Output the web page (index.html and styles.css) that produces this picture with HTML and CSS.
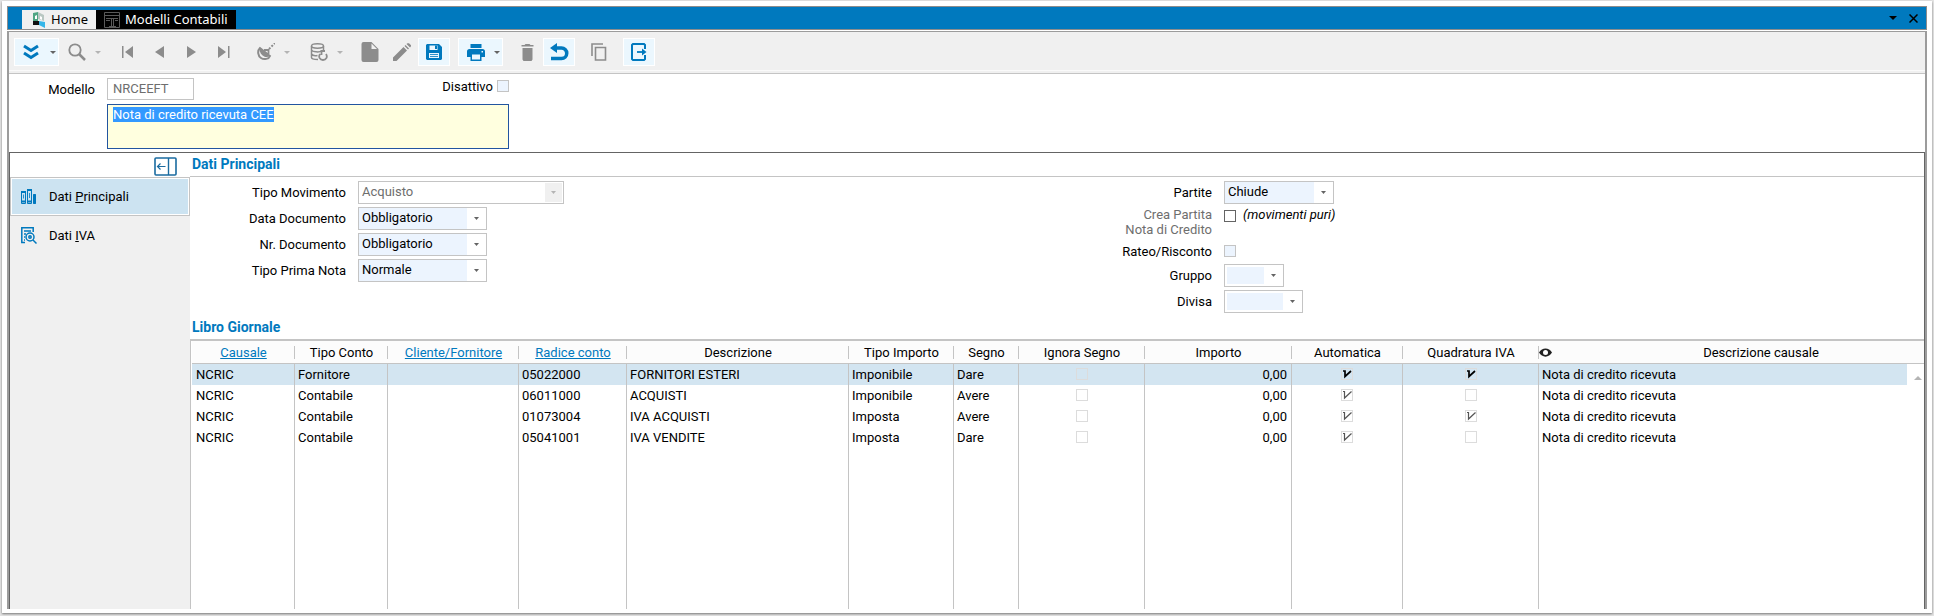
FILE: index.html
```html
<!doctype html>
<html lang="it">
<head>
  <meta charset="UTF-8">
  <meta name="viewport" content="width=device-width, initial-scale=1.0">
  <title>Modelli Contabili</title>
  <link rel="stylesheet" href="styles.css">
</head>
<body>
  <div class="frame">
    <div class="window">
      <header class="titlebar">
        <nav class="tabs">
          <a href="#" class="tab">
            <svg width="14" height="16" viewBox="0 0 14 16"><path d="M1 1l5-1v10H1z" fill="#4fa583"/><path d="M6 0l6 3v6L6 7z" fill="#b9c7c2"/><path d="M3 4l2-1v4H3zM8 4l2 1v3L8 7z" fill="#fff"/><path d="M1 9h6v4H1z" fill="#111"/><path d="M7 9l6 1v6l-6-3z" fill="#35b5e8"/></svg>
            <span>Home</span>
          </a>
          <a href="#" class="tab tab-active">
            <svg width="16" height="16" viewBox="0 0 16 16" fill="none" stroke="#5a5a5a"><path d="M.5 .5h15v15H.5zM1 3.500h14M2 6.500h12M7.500 7v7M9.500 7v7M2 8.500h4M11 8.500h3M5 14.500h7"/></svg>
            <span>Modelli Contabili</span>
          </a>
        </nav>
        <div class="winbtns">
          <button type="button" aria-label="Elenco"><svg width="8" height="4" viewBox="0 0 8 4"><path d="M0 0h8L4 4z"/></svg></button>
          <button type="button" aria-label="Chiudi"><svg width="9" height="9" viewBox="0 0 9 9"><path d="M.5 .5l8 8M8.500 .5l-8 8" stroke="#000" stroke-width="1.500"/></svg></button>
        </div>
      </header>

      <div class="toolbar">
        <div class="group">
          <button type="button" class="tool split on" aria-label="Azioni">
            <svg width="16" height="16" viewBox="0 0 16 16" fill="none" stroke="#0079be" stroke-width="3"><path d="M1 2l7 4.500L15 2M1 9l7 4.500L15 9"/></svg>
            <i class="caret"></i>
          </button>
          <button type="button" class="tool split" aria-label="Cerca">
            <svg width="18" height="18" viewBox="0 0 18 18" fill="none" stroke="#8c8c8c"><circle cx="7" cy="7" r="5.700" stroke-width="1.800"/><path d="M11 11l6 6" stroke-width="2.500"/></svg>
            <i class="caret"></i>
          </button>
        </div>
        <div class="group">
          <button type="button" class="tool" aria-label="Primo"><svg width="12" height="12" viewBox="0 0 12 12" fill="#8c8c8c"><path d="M0 0h1.500v12H0zM11 0v12L3 6z"/></svg></button>
          <button type="button" class="tool" aria-label="Precedente"><svg width="12" height="12" viewBox="0 0 12 12" fill="#8c8c8c"><path d="M10 0v12L1 6z"/></svg></button>
          <button type="button" class="tool" aria-label="Successivo"><svg width="12" height="12" viewBox="0 0 12 12" fill="#8c8c8c"><path d="M1 0v12l9-6z"/></svg></button>
          <button type="button" class="tool" aria-label="Ultimo"><svg width="12" height="12" viewBox="0 0 12 12" fill="#8c8c8c"><path d="M10 0h1.500v12H10zM0 0v12l8-6z"/></svg></button>
        </div>
        <div class="group">
          <button type="button" class="tool split" aria-label="Trasmissione">
            <svg width="18" height="18" viewBox="0 0 18 18" fill="none" stroke="#8c8c8c"><path d="M3 5C0 8 1 13 4 15s8 1 9-2L3 5z" stroke-width="2"/><path d="M3 5l10 8c-3 2-6 1-8-1S2 7 3 5z" fill="#8c8c8c" stroke="none"/><path d="M7 7h4.500v4" stroke-width="1.800"/><path d="M12 6l6-6" stroke-width="2" stroke-dasharray="2 1.500"/></svg>
            <i class="caret"></i>
          </button>
        </div>
        <div class="group">
          <button type="button" class="tool split" aria-label="Archivio">
            <svg width="18" height="18" viewBox="0 0 18 18" fill="none" stroke="#8c8c8c" stroke-width="1.500"><ellipse cx="7.500" cy="3" rx="6" ry="2.200"/><path d="M1.500 3v11.500c0 1.500 3 2 6.500 2M13.500 3v5M1.500 7c1 2 8 2.500 10 1M1.500 11c1 1.500 4 2 6 1.500"/><path d="M10 11c-2 3 0 6 3 6s5-3 3-6M15 8h-3.500v4" stroke-width="1.800"/></svg>
            <i class="caret"></i>
          </button>
        </div>
        <div class="group">
          <button type="button" class="tool" aria-label="Nuovo"><svg width="18" height="22" viewBox="0 0 18 22" fill="#8c8c8c"><path d="M2.500 1h8l7 7v11a2 2 0 0 1-2 2h-13a2 2 0 0 1-2-2V3a2 2 0 0 1 2-2z"/><path d="M10.500 2.500v5.500H16z" fill="#f0f0f0"/></svg></button>
          <button type="button" class="tool" aria-label="Modifica"><svg width="18" height="18" viewBox="0 0 18 18" fill="#8c8c8c"><path d="M0 14.500V18h3.500L14 7.500 10.500 4zM11.500 3l1-1 3.500 3.500-1 1zM13.500 1l1-.8h1.500L18 2.200v1L17 4.500z"/></svg></button>
          <button type="button" class="tool on" aria-label="Salva"><svg width="16" height="16" viewBox="0 0 16 16"><path d="M1 0h12l3 3v12l-1 1H1l-1-1V1z" fill="#0079be"/><path d="M3.500 1.500h8V6h-8zM3 9h10v5H3z" fill="#ebf7fe"/><path d="M9 1.500h2V5H9z" fill="#0079be"/><path d="M4 10.500h8M4 12.500h8" stroke="#0079be" stroke-width=".8"/></svg></button>
        </div>
        <div class="group">
          <button type="button" class="tool split on" aria-label="Stampa">
            <svg width="18" height="17" viewBox="0 0 18 17" fill="#0079be"><path d="M3.500 0h11v4h-11zM2.500 5h13A2.500 2.500 0 0 1 18 7.500V13h-3.500v4h-11v-4H0V7.500A2.500 2.500 0 0 1 2.500 5z"/><path d="M5 10.500h8v5H5zM14.500 7h1.500v1.500h-1.500z" fill="#ebf7fe"/></svg>
            <i class="caret"></i>
          </button>
        </div>
        <div class="group">
          <button type="button" class="tool" aria-label="Elimina"><svg width="13" height="17" viewBox="0 0 13 17" fill="#8c8c8c"><path d="M4.500 0h4l1 1H12.500v1.500H.5V1h3zM1.500 4h10v11.500l-1 1.500h-8l-1-1.500z"/></svg></button>
          <button type="button" class="tool on" aria-label="Annulla"><svg width="19" height="18" viewBox="0 0 19 18"><path d="M5 5h6.500a5 5 0 0 1 0 10.500H1" fill="none" stroke="#0079be" stroke-width="3.500"/><path d="M0 5l7-5v10z" fill="#0079be"/></svg></button>
        </div>
        <div class="group">
          <button type="button" class="tool" aria-label="Copia"><svg width="16" height="18" viewBox="0 0 16 18" fill="none" stroke="#8c8c8c" stroke-width="1.600"><path d="M1 13V1h11M4.500 4.500h10v12.500h-10z"/></svg></button>
        </div>
        <div class="group">
          <button type="button" class="tool on" aria-label="Esci"><svg width="16" height="18" viewBox="0 0 16 18" fill="none" stroke="#0079be" stroke-width="2"><path d="M14 6V2l-1-1H2L1 2v14l1 1h11l1-1v-4"/><path d="M6 9h6" stroke-width="1.800"/><path d="M11 5.500V12.500L15.500 9z" fill="#0079be" stroke="none"/></svg></button>
        </div>
      </div>

      <form class="head">
        <label for="modello">Modello</label>
        <div class="head-row">
          <input type="text" id="modello" class="code" value="NRCEEFT" readonly>
          <label class="disattivo">Disattivo <input type="checkbox" class="check check-blue"></label>
        </div>
        <textarea id="descrizione" class="descr" aria-label="Descrizione" spellcheck="false">Nota di credito ricevuta CEE</textarea>
      </form>

      <div class="body">
        <aside class="side">
          <div class="side-top">
            <button type="button" class="collapse" aria-label="Riduci"><svg width="23" height="19" viewBox="0 0 23 19" fill="none" stroke="#1a6ba0"><rect x="1" y="1" width="21" height="17" rx="1" stroke-width="1.600"/><path d="M14.500 1v17" stroke-width="1.400"/><path d="M3.500 9.500h8M6.500 6.500l-3 3 3 3" stroke-width="1.200"/></svg></button>
          </div>
          <a href="#" class="side-item side-active">
            <svg width="16" height="16" viewBox="0 0 16 16" fill="none" stroke="#0079be"><path d="M.5 3.500h4v11h-4zM6.500 1.500h4v13h-4zM12.500 5.500h2v9h-2z"/><path d="M0 12.500h5M0 3h5M6 1h5M6 12.500h5M13.500 5v10" stroke-width="2"/><path d="M2.500 5.500v4M8.500 4v5" stroke-width=".8"/></svg>
            <span>Dati <u>P</u>rincipali</span>
          </a>
          <a href="#" class="side-item">
            <svg width="16" height="17" viewBox="0 0 16 17" fill="none" stroke="#0079be" stroke-width="1.500"><path d="M4 15.500H.8V.8h11.400V5M3 4h7M3 7h2M3 10h1M3 13h1"/><circle cx="9" cy="10" r="4"/><circle cx="9" cy="10" r="1.200"/><path d="M12 13l3.500 3.500"/></svg>
            <span>Dati <u>I</u>VA</span>
          </a>
        </aside>

        <main class="content">
          <h2 class="title title-line">Dati Principali</h2>
          <form class="fields">
            <div class="col">
              <div class="field">
                <label for="tipomov">Tipo Movimento</label>
                <select id="tipomov" class="combo combo-xl" disabled><option>Acquisto</option></select>
              </div>
              <div class="field">
                <label for="datadoc">Data Documento</label>
                <select id="datadoc" class="combo combo-l"><option>Obbligatorio</option></select>
              </div>
              <div class="field">
                <label for="nrdoc">Nr. Documento</label>
                <select id="nrdoc" class="combo combo-l"><option>Obbligatorio</option></select>
              </div>
              <div class="field">
                <label for="prima">Tipo Prima Nota</label>
                <select id="prima" class="combo combo-l"><option>Normale</option></select>
              </div>
            </div>
            <div class="col">
              <div class="field">
                <label for="partite">Partite</label>
                <select id="partite" class="combo combo-m"><option>Chiude</option></select>
              </div>
              <div class="field field-top">
                <label for="crea" class="dim">Crea Partita<br>Nota di Credito</label>
                <input type="checkbox" id="crea" class="check check-dark">
                <em>(movimenti puri)</em>
              </div>
              <div class="field field-short">
                <label for="rateo">Rateo/Risconto</label>
                <input type="checkbox" id="rateo" class="check check-blue">
              </div>
              <div class="field">
                <label for="gruppo">Gruppo</label>
                <select id="gruppo" class="combo combo-empty combo-xs"><option></option></select>
              </div>
              <div class="field">
                <label for="divisa">Divisa</label>
                <select id="divisa" class="combo combo-empty combo-s"><option></option></select>
              </div>
            </div>
          </form>

          <h2 class="title title-grid">Libro Giornale</h2>
          <div class="gridbox">
            <table class="journal">
              <colgroup>
                <col class="w-causale"><col class="w-conto"><col class="w-cliente"><col class="w-radice"><col class="w-descr"><col class="w-importo"><col class="w-segno"><col class="w-ignora"><col class="w-valore"><col class="w-auto"><col class="w-quad"><col><col class="w-scroll">
              </colgroup>
              <thead>
                <tr>
                  <th><a href="#">Causale</a></th>
                  <th>Tipo Conto</th>
                  <th><a href="#">Cliente/Fornitore</a></th>
                  <th><a href="#">Radice conto</a></th>
                  <th>Descrizione</th>
                  <th>Tipo Importo</th>
                  <th>Segno</th>
                  <th>Ignora Segno</th>
                  <th>Importo</th>
                  <th>Automatica</th>
                  <th>Quadratura IVA</th>
                  <th colspan="2" class="last">
                    <div class="eyehead">
                      <svg width="13" height="9" viewBox="0 0 13 9"><path d="M0 4.500C3-1 10-1 13 4.500 10 10 3 10 0 4.500z" fill="#222"/><circle cx="6.500" cy="4.500" r="2.500" fill="#fff"/></svg>
                      <span>Descrizione causale</span>
                    </div>
                  </th>
                </tr>
              </thead>
              <tbody>
                <tr class="selected">
                  <td>NCRIC</td><td>Fornitore</td><td></td><td>05022000</td><td>FORNITORI ESTERI</td><td>Imponibile</td><td>Dare</td>
                  <td class="mid"><input type="checkbox" class="check" aria-label="Ignora Segno"></td>
                  <td class="num">0,00</td>
                  <td class="mid"><input type="checkbox" class="check" aria-label="Automatica" checked></td>
                  <td class="mid"><input type="checkbox" class="check" aria-label="Quadratura IVA" checked></td>
                  <td class="last">Nota di credito ricevuta</td>
                  <td class="scroll" rowspan="5"><button type="button" aria-label="Su"><svg width="8" height="4" viewBox="0 0 8 4"><path d="M4 0l4 4H0z" fill="#b4b4b4"/></svg></button></td>
                </tr>
                <tr>
                  <td>NCRIC</td><td>Contabile</td><td></td><td>06011000</td><td>ACQUISTI</td><td>Imponibile</td><td>Avere</td>
                  <td class="mid"><input type="checkbox" class="check" aria-label="Ignora Segno"></td>
                  <td class="num">0,00</td>
                  <td class="mid"><input type="checkbox" class="check" aria-label="Automatica" checked></td>
                  <td class="mid"><input type="checkbox" class="check" aria-label="Quadratura IVA"></td>
                  <td class="last">Nota di credito ricevuta</td>
                </tr>
                <tr>
                  <td>NCRIC</td><td>Contabile</td><td></td><td>01073004</td><td>IVA ACQUISTI</td><td>Imposta</td><td>Avere</td>
                  <td class="mid"><input type="checkbox" class="check" aria-label="Ignora Segno"></td>
                  <td class="num">0,00</td>
                  <td class="mid"><input type="checkbox" class="check" aria-label="Automatica" checked></td>
                  <td class="mid"><input type="checkbox" class="check" aria-label="Quadratura IVA" checked></td>
                  <td class="last">Nota di credito ricevuta</td>
                </tr>
                <tr>
                  <td>NCRIC</td><td>Contabile</td><td></td><td>05041001</td><td>IVA VENDITE</td><td>Imposta</td><td>Dare</td>
                  <td class="mid"><input type="checkbox" class="check" aria-label="Ignora Segno"></td>
                  <td class="num">0,00</td>
                  <td class="mid"><input type="checkbox" class="check" aria-label="Automatica" checked></td>
                  <td class="mid"><input type="checkbox" class="check" aria-label="Quadratura IVA"></td>
                  <td class="last">Nota di credito ricevuta</td>
                </tr>
                <tr class="filler">
                  <td></td><td></td><td></td><td></td><td></td><td></td><td></td><td></td><td></td><td></td><td></td><td class="last"></td>
                </tr>
              </tbody>
            </table>
          </div>
        </main>
      </div>
    </div>
  </div>

  <script type="text/javascript">
    var descr = document.getElementById("descrizione");
    descr.focus();
    descr.select();
  </script>
</body>
</html>
```
FILE: styles.css
```css
* {
  box-sizing: border-box;
}
html, body {
  margin: 0;
  padding: 0;
}
body {
  display: flex;
  min-height: 100vh;
  padding: 1px 2px 3px 2px;
  background: #e4e4e4;
  font-family: Roboto, "Liberation Sans", sans-serif;
  font-size: 13px;
  line-height: 15px;
  color: #000;
}
button, input, select, textarea {
  margin: 0;
  font: inherit;
}
button {
  padding: 0;
  border: 0;
  background: none;
}
a {
  color: inherit;
  text-decoration: none;
}
svg {
  display: block;
  flex: none;
}

.frame {
  display: flex;
  flex: 1;
  min-width: 0;
  padding: 5px 5px 4px;
  background: #fff;
  box-shadow: 0 1px 2px #777;
}
.window {
  display: flex;
  flex-direction: column;
  flex: 1;
  min-width: 0;
}

/* title bar */
.titlebar {
  display: flex;
  align-items: flex-end;
  justify-content: space-between;
  height: 24px;
  padding-left: 14px;
  border: 1px solid #8c8c8c;
  background: #0079be;
}
.tabs {
  display: flex;
  font-family: "Noto Sans", sans-serif;
}
.tab {
  display: flex;
  align-items: center;
  gap: 5px;
  height: 19px;
  padding: 0 8px 0 10px;
  background: #f0f0f0;
}
.tab-active {
  padding: 0 8px;
  background: #000;
  color: #fff;
}
.winbtns {
  display: flex;
  align-self: center;
  align-items: center;
  gap: 12px;
  padding-right: 8px;
}

/* toolbar */
.toolbar {
  display: flex;
  align-items: center;
  gap: 8px;
  height: 43px;
  margin-top: 1px;
  padding: 0 5px 2px;
  border: solid #9c9c9c;
  border-width: 1px 2px 0;
  background: #f0f0f0;
  box-shadow: inset 0 -1px #c4c4c4, inset 0 -3px #f0f0f0, inset 0 -4px #fafafa;
}
.group {
  display: flex;
}
.tool {
  display: flex;
  align-items: center;
  justify-content: center;
  width: 32px;
  height: 28px;
  border: 1px solid transparent;
}
.split {
  justify-content: space-between;
  width: 45px;
  padding: 0 2px 0 8px;
}
.on {
  border-color: #fff;
  background: #ebf7fe;
}
.caret {
  border: 3px solid transparent;
  border-top-color: #b4b4b4;
  border-bottom-width: 0;
}
.on .caret {
  border-top-color: #646464;
}

/* record header */
.head {
  display: grid;
  grid-template-columns: 86px 402px;
  column-gap: 12px;
  row-gap: 4px;
  padding: 4px 0 3px;
  border: solid #9c9c9c;
  border-width: 0 2px;
}
.head > label {
  padding-top: 4px;
  text-align: right;
}
.head-row {
  display: flex;
  justify-content: space-between;
}
.code {
  width: 87px;
  height: 22px;
  padding: 0 5px 2px;
  border: 1px solid #c4c4c4;
  color: #6e6e6e;
  outline: none;
}
.disattivo {
  display: flex;
  gap: 4px;
  align-items: center;
  height: 16px;
}
.descr {
  grid-column: 2;
  height: 45px;
  padding: 2px 5px;
  border: 1px solid #2255a0;
  background: #ffffdf;
  outline: none;
  resize: none;
}
.descr::selection {
  background: #3399ff;
  color: #fff;
}

/* check boxes and combos */
.check {
  flex: none;
  width: 12px;
  height: 12px;
  appearance: none;
  border: 1px solid #dcdcdc;
}
.check:checked {
  background: url("data:image/svg+xml,%3Csvg xmlns='http://www.w3.org/2000/svg' viewBox='0 0 10 10'%3E%3Cpath d='M1 1.500h1.500V8L9.500 1.500' fill='none' stroke='%23555' stroke-width='1.200'/%3E%3C/svg%3E") center / 10px 10px no-repeat;
}
.selected .check:checked {
  background-image: url("data:image/svg+xml,%3Csvg xmlns='http://www.w3.org/2000/svg' viewBox='0 0 10 10'%3E%3Cpath d='M1 2h2v5.500L9 2' fill='none' stroke='%23000' stroke-width='1.700'/%3E%3C/svg%3E");
}
.check-blue {
  border-color: #c4c4c4;
  background: #ecf4fe;
}
.check-dark {
  border-color: #646464;
}
.combo {
  height: 23px;
  padding: 0 22px 2px 3px;
  appearance: none;
  border: 1px solid #c4c4c4;
  border-radius: 0;
  background:
    url("data:image/svg+xml,%3Csvg xmlns='http://www.w3.org/2000/svg' viewBox='0 0 5 3'%3E%3Cpath d='M0 0h5L2.500 3z' fill='%23646464'/%3E%3C/svg%3E") right 7px center / 5px 3px no-repeat,
    linear-gradient(#ecf4fe, #ecf4fe) 0 0 / calc(100% - 19px) 100% no-repeat,
    #fff;
  color: #000;
}
.combo:disabled {
  background:
    url("data:image/svg+xml,%3Csvg xmlns='http://www.w3.org/2000/svg' viewBox='0 0 5 3'%3E%3Cpath d='M0 0h5L2.500 3z' fill='%23b4b4b4'/%3E%3C/svg%3E") right 7px center / 5px 3px no-repeat,
    linear-gradient(#f0f0f0, #f0f0f0) right 1px center / 17px 19px no-repeat,
    #fff;
  color: #6e6e6e;
  opacity: 1;
}
.combo-empty {
  background-position: right 7px center, 2px 2px;
  background-size: 5px 3px, calc(100% - 21px) 17px;
}
.combo-xl { width: 206px; }
.combo-l { width: 129px; }
.combo-m { width: 110px; }
.combo-s { width: 79px; }
.combo-xs { width: 60px; }

/* body */
.body {
  display: flex;
  flex: 1;
  border: solid #9c9c9c;
  border-width: 0 2px;
}
.side {
  display: flex;
  flex-direction: column;
  width: 181px;
  border: solid #646464;
  border-width: 1px 0 0 1px;
  background: #f0f0f0;
}
.side-top {
  display: flex;
  justify-content: flex-end;
  height: 24px;
  padding: 2px 13px 0 0;
  background: #fff;
}
.side-item {
  display: flex;
  align-items: center;
  gap: 12px;
  height: 39px;
  padding-left: 10px;
  border: 1px solid transparent;
}
.side-active {
  border-color: #c4c4c4;
  background: #cce3f1;
  box-shadow: inset 0 0 0 1px #fff;
}
.content {
  display: flex;
  flex-direction: column;
  flex: 1;
  min-width: 0;
  border: solid #646464;
  border-width: 1px 1px 0 0;
}
.title {
  margin: 0;
  padding: 0 2px;
  font-size: 14px;
  line-height: 23px;
  font-weight: bold;
  color: #0079be;
}
.title-line {
  border-bottom: 1px solid #c4c4c4;
}
.fields {
  display: flex;
  padding: 4px 2px 0 0;
}
.col {
  display: flex;
  flex-direction: column;
  flex: 1;
  gap: 3px;
}
.field {
  display: flex;
  align-items: center;
}
.field label {
  width: 156px;
  margin-right: 12px;
  text-align: right;
}
.field-top {
  align-items: flex-start;
  height: 31px;
}
.field-top .check {
  margin: 3px 7px 0 0;
}
.field-short {
  height: 20px;
}
.dim {
  color: #6e6e6e;
}

/* journal */
.title-grid {
  margin-top: 3px;
}
.gridbox {
  display: grid;
  flex: 1;
  padding-left: 1px;
  border: solid #c4c4c4;
  border-width: 2px 0 0 1px;
}
.journal {
  width: 100%;
  height: 100%;
  table-layout: fixed;
  border-spacing: 0;
}
.w-causale { width: 103px; }
.w-conto { width: 93px; }
.w-cliente { width: 131px; }
.w-radice { width: 108px; }
.w-descr { width: 222px; }
.w-importo { width: 105px; }
.w-segno { width: 65px; }
.w-ignora { width: 126px; }
.w-valore { width: 147px; }
.w-auto { width: 111px; }
.w-quad { width: 136px; }
.w-scroll { width: 17px; }
.journal th {
  height: 23px;
  padding: 0;
  border-bottom: 1px solid #c4c4c4;
  background: linear-gradient(#c4c4c4, #c4c4c4) right center / 1px 13px no-repeat #fcfcfc;
  font-weight: normal;
}
.journal th.last {
  background-size: 0 0;
}
.journal th a {
  color: #0079be;
  text-decoration: underline;
}
.eyehead {
  display: flex;
  align-items: center;
}
.eyehead span {
  flex: 1;
  padding-left: 46px;
}
.journal td {
  height: 21px;
  padding: 0 3px;
  border-right: 1px solid #c4c4c4;
  white-space: nowrap;
}
.journal td:first-child {
  padding-left: 4px;
}
.journal td.last {
  border-right: 0;
}
.journal .filler td {
  height: auto;
}
.journal .mid {
  padding-bottom: 2px;
}
.mid .check {
  display: block;
  margin: 0 auto;
}
.journal .num {
  padding-right: 4px;
  text-align: right;
}
.selected td {
  background: #d3e5f1;
}
.journal .scroll {
  padding: 12px 2px 0 7px;
  border: 0;
  background: #fff;
  vertical-align: top;
}
.scroll button {
  display: block;
}
```
